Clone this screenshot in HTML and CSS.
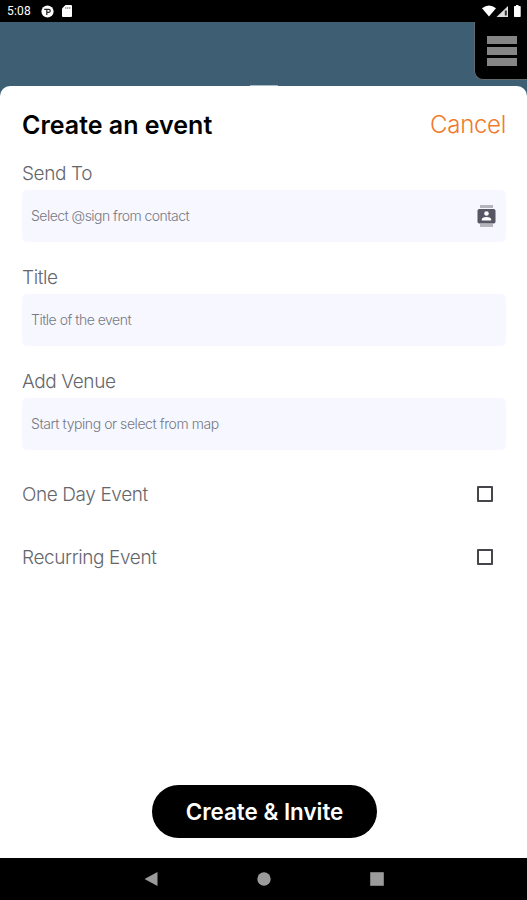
FILE: index.html
```html
<!DOCTYPE html>
<html lang="en">
<head>
<meta charset="utf-8">
<title>Create an event</title>
<link rel="stylesheet" href="styles.css">
</head>
<body>
<div class="screen">
  <header class="status">
    <span class="clock">5:08</span>
    <svg class="status-p" viewBox="0 0 13 13"><circle cx="6.5" cy="6.5" r="6.1" fill="#fff"/><path d="M3.200 4.300H5.800V10M5.800 4.300H7.800a1.500 1.500 0 0 1 0 3H5.800" fill="none" stroke="#222" stroke-width="1.200"/></svg>
    <svg class="status-sd" viewBox="0 0 10 12"><path d="M3.5 0H9q1 0 1 1v10q0 1-1 1H1q-1 0-1-1V3.5z" fill="#fff"/><path d="M3.8 2v2M5.8 2v2M7.8 2v2" stroke="#777" stroke-width=".9"/></svg>
    <svg class="status-right" viewBox="0 0 40 13"><path d="M0 3.3Q7-2.3 14 3.3L7 11.5z" fill="#fff"/><path d="M14.5 12 26 1v11z" fill="#ddd"/><path d="M22.8 5.5h2v5h-2z" fill="#333"/><path d="M34 0h2.5v1H38q.7 0 .7.7v9.6q0 .7-.7.7h-5.300q-.7 0-.7-.7V1.700q0-.7.7-.7H34z" fill="#fff"/></svg>
  </header>
  <div class="backdrop">
    <div class="handle"></div>
    <div class="menu"><i></i><i></i><i></i></div>
  </div>
  <main class="sheet">
    <div class="heading"><h1>Create an event</h1><a class="cancel">Cancel</a></div>
    <label class="label send">Send To</label>
    <div class="field"><span class="hint hint-send">Select @sign from contact</span>
      <svg class="contact" viewBox="0 0 19 24"><path d="M3 1h13v3H3zM3 20h13v3H3z" fill="#b4b5bd"/><rect x=".5" y="5" width="18" height="14.500" rx="1.800" fill="#555862"/><circle cx="9.500" cy="9.500" r="2.300" fill="#fff"/><path d="M4.800 16.500v-1q0-2.500 4.700-2.500t4.700 2.500v1z" fill="#fff"/></svg>
    </div>
    <label class="label title">Title</label>
    <div class="field"><span class="hint hint-title">Title of the event</span></div>
    <label class="label venue">Add Venue</label>
    <div class="field"><span class="hint hint-venue">Start typing or select from map</span></div>
    <div class="option"><span class="label day">One Day Event</span><i class="box"></i></div>
    <div class="option second"><span class="label recurring">Recurring Event</span><i class="box"></i></div>
    <button class="invite"><span>Create &amp; Invite</span></button>
  </main>
  <nav class="navbar">
    <svg viewBox="0 0 14 16"><path d="M.5 8 13.500 1v14z" fill="#9b9b9b"/></svg>
    <svg viewBox="0 0 14 16"><circle cx="7" cy="8" r="6.700" fill="#9b9b9b"/></svg>
    <svg viewBox="0 0 14 16"><path d="M.2 1.200h13.600v13.600H.2z" fill="#9b9b9b"/></svg>
  </nav>
</div>
</body>
</html>
```
FILE: styles.css
```css
* { box-sizing: border-box; }
body { margin: 0; background: #fff; font-family: Inter, "Liberation Sans", sans-serif; }
.screen { width: 527px; height: 900px; display: flex; flex-direction: column; overflow: hidden; }
.status { height: 22px; background: #000; display: flex; align-items: center; padding-left: 7px; flex: none; }
.clock { width: 24px; color: #fff; font: 12px/22px Roboto, sans-serif; letter-spacing: .2px; white-space: nowrap; }
.status-p { width: 13px; height: 13px; margin-left: 9.500px; }
.status-sd { width: 10px; height: 12px; margin-left: 8px; }
.status-right { width: 40px; height: 13px; margin-left: auto; margin-right: 5px; }
.backdrop { height: 80px; margin-bottom: -16px; background: #3e5e74; display: flex; flex: none; }
.handle { width: 28px; height: 1px; margin: 63px 0 0 250px; background: #a9b9c4; }
.menu { width: 53px; height: 58px; margin-left: auto; background: #000; border: solid #656a6c; border-width: 0 0 1px 1px; border-radius: 0 0 0 9px; padding: 14px 10px 0 12px; display: flex; flex-direction: column; gap: 3px; }
.menu i { height: 8px; background: #858585; }
.sheet { flex: 1; background: #fff; border-radius: 10px 10px 0 0; padding: 0 21px 0 22px; display: flex; flex-direction: column; }
.heading { height: 76px; padding-top: 2px; display: flex; justify-content: space-between; align-items: center; }
h1 { margin: 0; font-size: 25px; font-weight: 600; line-height: 30px; white-space: nowrap; }
.cancel { color: #ef7a2c; font-size: 24px; font-weight: 300; line-height: 30px; letter-spacing: -.3px; }
.label { color: #65666c; font-size: 19px; font-weight: 300; line-height: 24px; height: 28px; letter-spacing: -.4px; white-space: nowrap; }
.title, .venue { margin-top: 24px; }
.field { height: 52px; flex: none; background: #f6f7ff; border-radius: 5px; display: flex; align-items: center; justify-content: space-between; padding: 0 10px 0 9px; }
.hint { color: #777982; font-size: 14px; font-weight: 300; white-space: nowrap; margin-top: -2px; }
.hint-send { letter-spacing: -.53px; }
.hint-title { letter-spacing: -.5px; }
.hint-venue { letter-spacing: -.43px; }
.contact { width: 19px; height: 24px; }
.option { display: flex; justify-content: space-between; align-items: center; height: 24px; margin-top: 32px; padding-right: 13px; }
.second { margin-top: 39px; }
.option .label { height: 24px; line-height: 26px; }
.box { width: 16px; height: 16px; border: 2px solid #45454a; border-radius: 1px; }
.invite { width: 225px; height: 53px; border: 0; border-radius: 27px; background: #000; color: #fff; font: 600 22.400px/30px Inter, sans-serif; margin: auto 0 20px 130px; padding: 1px 0 0; white-space: nowrap; }
.navbar { height: 42px; flex: none; background: #000; display: flex; align-items: center; gap: 99px; padding-left: 144px; }
.navbar svg { width: 14px; height: 16px; }
```
